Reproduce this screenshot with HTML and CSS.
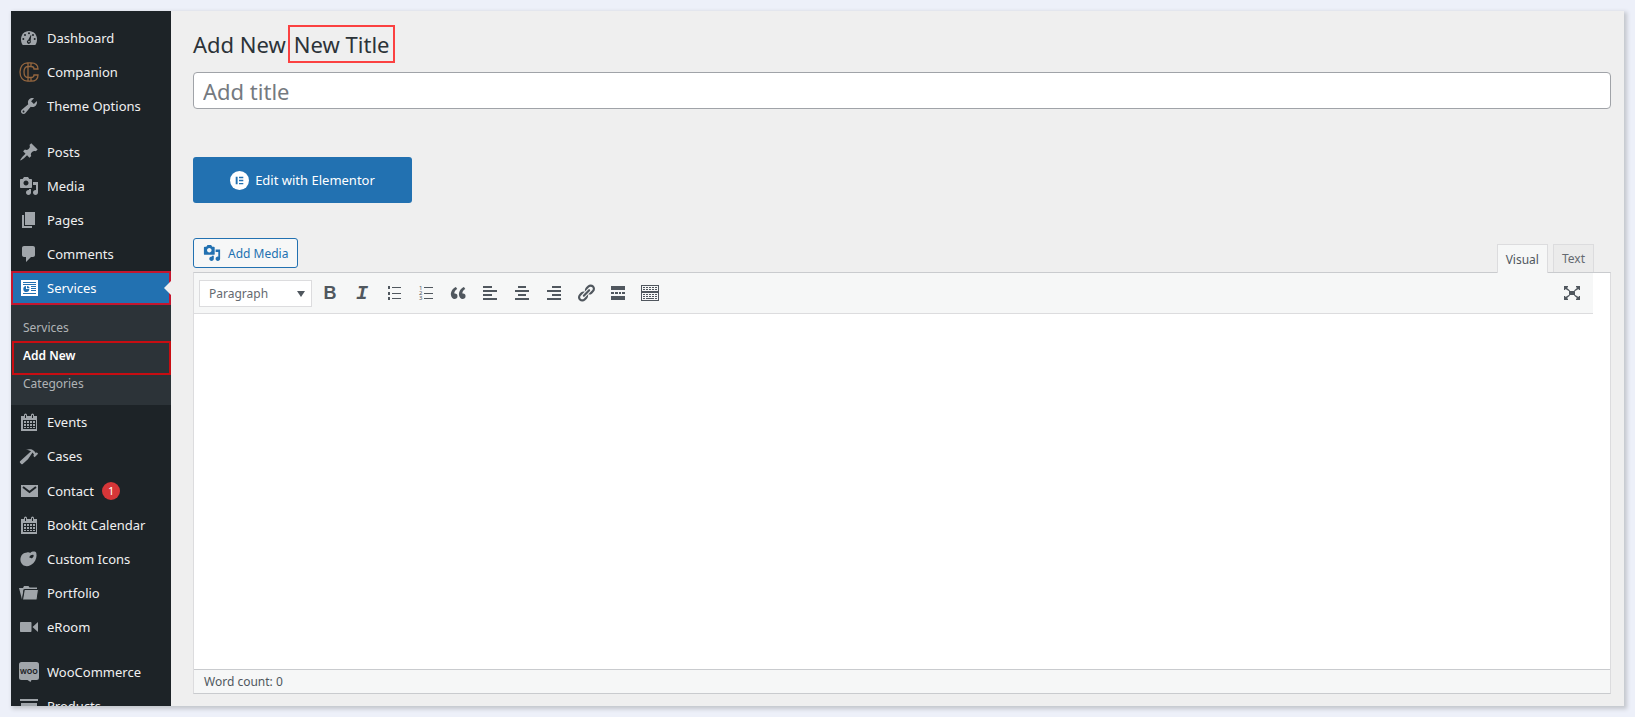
FILE: index.html
```html
<!DOCTYPE html>
<html lang="en">
<head>
    <meta charset="UTF-8">
    <meta name="viewport" content="width=device-width, initial-scale=1.0">
    <title>Add New Service</title>
    <link rel="stylesheet" href="styles.css">
</head>
<body>

    <div class="admin">
        <nav class="sidebar">
            <ul class="menu">
                <li><a href="#">
                    <svg class="icon" viewBox="0 0 20 20"><path d="M3.76 17h12.48c1.34-1.63 1.76-3.73 1.76-6 0-4.42-3.58-8-8-8s-8 3.58-8 8c0 2.27.42 4.37 1.76 6z"/><g class="hole"><circle cx="10" cy="5.2" r="1"/><circle cx="6" cy="7" r="1"/><circle cx="14" cy="7" r="1"/><circle cx="4.3" cy="11" r="1"/><circle cx="15.7" cy="11" r="1"/><path d="M11.8 7l.5.2-.7 5.6a2 2 0 1 1-2.4-.9z"/></g><circle cx="10" cy="13.6" r=".8"/></svg>
                    Dashboard</a></li>
                <li><a href="#">
                    <svg class="icon logo" viewBox="0 0 20 20"><path d="M9 .8h-.5C4 .8 1 4.500 1 10s3 9.200 7.500 9.200H9zM9 4.500C6 4.500 5 7 5 10s1 5.500 4 5.500M12 .8h-3M12 .8c4 0 7 2 7 6.200h-4c0-1.500-1.300-2.500-3-2.500zM12 19.200c4 0 7-2 7-6.200h-4c0 1.500-1.300 2.500-3 2.500zM9 4.500h3M9 15.500h3M9 19.200h3"/></svg>
                    Companion</a></li>
                <li><a href="#">
                    <svg class="icon" viewBox="0 0 20 20"><path d="M16.68 9.77c-1.34 1.34-3.3 1.67-4.95.99l-5.41 6.52c-.99.99-2.59.99-3.58 0s-.99-2.59 0-3.57l6.52-5.42c-.68-1.65-.35-3.61.99-4.95 1.28-1.28 3.12-1.62 4.72-1.06l-2.89 2.89 2.82 2.82 2.86-2.87c.53 1.58.18 3.39-1.08 4.65zM3.81 16.21c.4.39 1.04.39 1.43 0 .4-.4.4-1.04 0-1.43-.39-.4-1.03-.4-1.43 0-.39.39-.39 1.03 0 1.43z"/></svg>
                    Theme Options</a></li>
                <li class="separator"></li>
                <li><a href="#">
                    <svg class="icon" viewBox="0 0 20 20"><path d="M10.44 3.02l1.82-1.82 6.36 6.35-1.83 1.82c-1.05-.68-2.48-.57-3.41.36l-.75.75c-.92.93-1.04 2.35-.35 3.41l-1.83 1.82-2.41-2.41-2.8 2.79c-.42.42-3.38 2.71-3.8 2.29s1.86-3.39 2.28-3.81l2.79-2.79L4.1 9.36l1.83-1.82c1.05.69 2.48.57 3.4-.36l.75-.75c.93-.92 1.05-2.35.36-3.41z"/></svg>
                    Posts</a></li>
                <li><a href="#">
                    <svg class="icon" viewBox="0 0 20 20"><path id="media" d="M13 11V4c0-.55-.45-1-1-1h-1.67L9 1H5L3.67 3H2c-.55 0-1 .45-1 1v7c0 .55.45 1 1 1h10c.55 0 1-.45 1-1zM7 4.5c1.38 0 2.5 1.12 2.5 2.5S8.38 9.5 7 9.5 4.5 8.38 4.5 7 5.62 4.5 7 4.5zM14 6h5v10.5c0 1.38-1.12 2.5-2.5 2.5S14 17.88 14 16.5s1.12-2.5 2.5-2.5c.17 0 .34.02.5.05V9h-3V6zm-4 8.05V13h2v3.5c0 1.38-1.12 2.5-2.5 2.5S7 17.88 7 16.5 8.12 14 9.5 14c.17 0 .34.02.5.05z"/></svg>
                    Media</a></li>
                <li><a href="#">
                    <svg class="icon" viewBox="0 0 20 20"><path d="M6 15V2h10v13H6zm-1 1h8v2H3V5h2v11z"/></svg>
                    Pages</a></li>
                <li><a href="#">
                    <svg class="icon" viewBox="0 0 20 20"><path d="M5 2h9c1.1 0 2 .9 2 2v7c0 1.1-.9 2-2 2h-2l-5 5v-5H5c-1.1 0-2-.9-2-2V4c0-1.1.9-2 2-2z"/></svg>
                    Comments</a></li>
                <li class="current"><a href="#">
                    <svg class="icon" viewBox="0 0 20 20"><path d="M2 2h17v16H2z"/><g class="hole"><path d="M4 4h13v1H4zM4 6h13v1H4zM4 15h13v1H4zM12 8h5v1h-5zM12 10h5v1h-5zM12 12h5v1h-5z"/><path d="M7 8v3h3.300A3 3 0 1 1 7 8z"/><path d="M8 8c1.700 0 2.500 1 2.500 2.200H8z"/></g></svg>
                    Services</a>
                    <ul class="submenu">
                        <li><a href="#">Services</a></li>
                        <li class="active"><a href="#">Add New</a></li>
                        <li><a href="#">Categories</a></li>
                    </ul>
                </li>
                <li><a href="#">
                    <svg class="icon" viewBox="0 0 20 20"><g id="calendar"><path d="M15 4h3v15H2V4h3V3a1.500 1.500 0 0 1 3 0v1h4V3a1.500 1.500 0 0 1 3 0v1z"/><path class="hole" d="M6 3h1v3H6zM13 3h1v3h-1zM4 8h13v9H4z"/><path d="M5 9h2v2H5zM8 9h2v2H8zM11 9h2v2h-2zM14 9h2v2h-2zM5 12h2v2H5zM8 12h2v2H8zM11 12h2v2h-2zM14 12h2v2h-2zM5 15h2v1H5zM8 15h2v1H8zM11 15h2v1h-2zM14 15h2v1h-2z"/></g></svg>
                    Events</a></li>
                <li><a href="#">
                    <svg class="icon" viewBox="0 0 20 20"><path d="M17.7 6.32l1.41 1.42-3.47 3.41-1.42-1.42.84-.82c-.32-.76-.81-1.57-1.51-2.31l-4.61 6.59-5.26 4.7c-.39.39-1.02.39-1.42 0l-1.2-1.21c-.39-.39-.39-1.02 0-1.41l10.97-9.92c-1.37-.86-3.21-1.46-5.67-1.48 2.7-.82 4.95-.93 6.58-.3 1.7.66 2.82 2.2 3.91 3.58z"/></svg>
                    Cases</a></li>
                <li class="contact"><a href="#">
                    <svg class="icon" viewBox="0 0 20 20"><path d="M2 4h17v12H2z"/><path class="flap" d="M4 6l6.500 5L17 6"/></svg>
                    Contact <span class="count">1</span></a></li>
                <li><a href="#">
                    <svg class="icon" viewBox="0 0 20 20"><use href="#calendar"/></svg>
                    BookIt Calendar</a></li>
                <li><a href="#">
                    <svg class="icon" viewBox="0 0 20 20"><path fill-rule="evenodd" d="M8 3.400c1.200-.4 2.600-.2 3.200.6C13 2.200 16.500 2 17.300 4c.8 3-.2 7.200-2.800 10-3 3.300-7.800 4.200-10.800 1.700C.6 13 .8 8 3.500 5.300 4.700 4 6.300 3.600 8 3.400zM14.500 6c-1.300-.5-3.400.5-4 1.800-.3.9.3 1.300 1.300 1 .2.700 1.100.7 1.700 0 .8-.8 1.500-1.800 1-2.800z"/></svg>
                    Custom Icons</a></li>
                <li><a href="#">
                    <svg class="icon" viewBox="0 0 20 20"><path d="M0 5h4l1-2h4.500l1 1.500H18v2H4.500L3 16.500z"/><path class="edge" d="M5.300 6.500h14.200L18 17H3.500z"/></svg>
                    Portfolio</a></li>
                <li><a href="#">
                    <svg class="icon" viewBox="0 0 20 20"><path d="M2 5h9.500c.6 0 1 .4 1 1v8c0 .6-.4 1-1 1H2c-.6 0-1-.4-1-1V6c0-.6.4-1 1-1zM13.500 10L19 5v10z"/></svg>
                    eRoom</a></li>
                <li class="separator short"></li>
                <li><a href="#">
                    <svg class="icon" viewBox="0 0 20 20"><path d="M2.500 0h15A2.500 2.500 0 0 1 20 2.500v13a2.500 2.500 0 0 1-2.500 2.500h-5l-1 2-3-2h-6A2.500 2.500 0 0 1 0 15.500v-13A2.500 2.500 0 0 1 2.500 0z"/><text class="woo" x="10" y="12" text-anchor="middle">WOO</text></svg>
                    WooCommerce</a></li>
                <li><a href="#">
                    <svg class="icon" viewBox="0 0 20 20"><path d="M1 3h18v2H1zM2 7h16v10H2z"/></svg>
                    Products</a></li>
            </ul>
        </nav>

        <main class="content">
            <h1>Add New<span class="marked">New Title</span></h1>
            <input class="title" type="text" placeholder="Add title" aria-label="Add title">

            <button class="elementor" type="button">
                <svg class="badge" viewBox="0 0 20 20"><circle cx="10" cy="10" r="10"/><path class="bars" d="M6 6h2v8H6zM9.500 6H14v1.500H9.500zM9.500 9.200H14v1.500H9.500zM9.500 12.500H14V14H9.500z"/></svg>
                Edit with Elementor
            </button>

            <div class="tools">
                <button class="add-media" type="button">
                    <svg viewBox="0 0 20 20"><use href="#media"/></svg>
                    Add Media
                </button>
                <div class="tabs">
                    <button class="tab selected" type="button">Visual</button>
                    <button class="tab" type="button">Text</button>
                </div>
            </div>

            <div class="editor">
                <div class="toolbar">
                    <div class="format">
                        <select aria-label="Format">
                            <option>Paragraph</option>
                            <option>Heading 1</option>
                            <option>Heading 2</option>
                        </select>
                        <svg viewBox="0 0 8 8"><path d="M0 1h8L4 7z"/></svg>
                    </div>
                    <button class="bold" type="button" aria-label="Bold">B</button>
                    <button class="italic" type="button" aria-label="Italic">I</button>
                    <button type="button" aria-label="Bulleted list">
                        <svg viewBox="0 0 20 20"><path d="M4 3h2v3H4zM4 9h2v3H4zM4 14h2v3H4zM8 4h9v1H8zM8 10h9v1H8zM8 15h9v1H8z"/></svg>
                    </button>
                    <button type="button" aria-label="Numbered list">
                        <svg viewBox="0 0 20 20"><path d="M8 4h9v1H8zM8 10h9v1H8zM8 15h9v1H8z"/><g class="digits"><text x="3" y="7">1</text><text x="3" y="12">2</text><text x="3" y="17">3</text></g></svg>
                    </button>
                    <button type="button" aria-label="Blockquote">
                        <svg viewBox="0 0 20 20"><path d="M9.49 13.22c0-.74-.2-1.38-.61-1.9-.62-.78-1.83-.88-2.53-.72-.29-1.65 1.11-3.75 2.92-4.65L7.88 4c-2.73 1.3-5.42 4.28-4.96 8.05C3.21 14.43 4.59 16 6.54 16c.85 0 1.56-.25 2.12-.75s.83-1.18.83-2.03zm8.05 0c0-.74-.2-1.38-.61-1.9-.63-.78-1.83-.88-2.53-.72-.29-1.65 1.11-3.75 2.92-4.65L15.93 4c-2.73 1.3-5.41 4.28-4.95 8.05.29 2.38 1.66 3.95 3.61 3.95.85 0 1.56-.25 2.12-.75s.83-1.18.83-2.03z"/></svg>
                    </button>
                    <button type="button" aria-label="Align left">
                        <svg viewBox="0 0 20 20"><path d="M3 3h9v2H3zM3 7h14v2H3zM3 11h9v2H3zM3 15h14v2H3z"/></svg>
                    </button>
                    <button type="button" aria-label="Align center">
                        <svg viewBox="0 0 20 20"><path d="M6 3h8v2H6zM3 7h14v2H3zM6 11h8v2H6zM3 15h14v2H3z"/></svg>
                    </button>
                    <button type="button" aria-label="Align right">
                        <svg viewBox="0 0 20 20"><path d="M8 3h9v2H8zM3 7h14v2H3zM8 11h9v2H8zM3 15h14v2H3z"/></svg>
                    </button>
                    <button type="button" aria-label="Insert link">
                        <svg viewBox="0 0 20 20"><path d="M17.74 2.76c1.68 1.69 1.68 4.41 0 6.1l-1.53 1.52c-1.12 1.12-2.7 1.47-4.14 1.09l2.62-2.61.76-.77.76-.76c.84-.84.84-2.2 0-3.04-.84-.85-2.2-.85-3.04 0l-.77.76-3.38 3.38c-.37-1.44-.02-3.02 1.1-4.14l1.52-1.53c1.69-1.68 4.42-1.68 6.1 0zM8.59 13.43l5.34-5.34c.42-.42.42-1.1 0-1.52-.44-.43-1.13-.39-1.53 0l-5.33 5.34c-.42.42-.42 1.1 0 1.52.44.43 1.13.39 1.52 0zm-.76 2.29l4.14-4.15c.38 1.44.03 3.02-1.09 4.14l-1.52 1.53c-1.69 1.68-4.41 1.68-6.1 0-1.68-1.68-1.68-4.42 0-6.1l1.53-1.52c1.12-1.12 2.7-1.47 4.14-1.1l-4.14 4.15c-.85.84-.85 2.2 0 3.05.84.84 2.2.84 3.04 0z"/></svg>
                    </button>
                    <button type="button" aria-label="Read more">
                        <svg viewBox="0 0 20 20"><path d="M3 3h14v4H3zM3 9h3v2H3zM7 9h3v2H7zM11 9h2v2h-2zM14 9h3v2h-3zM3 13h14v4H3z"/></svg>
                    </button>
                    <button type="button" aria-label="Toolbar toggle">
                        <svg viewBox="0 0 20 20"><path fill-rule="evenodd" d="M1 2h18v7H1zM2 3v5h16V3zM1 9h18v9H1zM2 10v7h16v-7z"/><path d="M3 4h2v1H3zM6 4h2v1H6zM9 4h2v1H9zM12 4h2v1h-2zM15 4h2v1h-2zM3 6h2v1H3zM6 6h2v1H6zM9 6h2v1H9zM12 6h2v1h-2zM15 6h2v1h-2zM3 11h2v1H3zM6 11h2v1H6zM9 11h2v1H9zM12 11h2v1h-2zM15 11h2v1h-2zM3 13h2v1H3zM6 13h2v1H6zM9 13h2v1H9zM12 13h2v1h-2zM15 13h2v1h-2zM3 15h2v1H3zM6 15h8v1H6zM15 15h2v1h-2z"/></svg>
                    </button>
                    <button class="fullscreen" type="button" aria-label="Distraction-free writing">
                        <svg viewBox="0 0 20 20"><path d="M7 8h6v4H7zM2 3h4v1L5 5l3 2.500-.8.8L3.500 6 3 7H2zM18 3h-4v1l1 1-3 2.500.8.8L16.500 6l.5 1h1zM2 17h4v-1l-1-1 3-2.500-.8-.8L3.500 14 3 13H2zM18 17h-4v-1l1-1-3-2.500.8-.8 3.700 2.300.5-1h1z"/></svg>
                    </button>
                </div>
                <textarea class="text" aria-label="Content"></textarea>
                <div class="status">Word count: 0</div>
            </div>
        </main>
    </div>

</body>
</html>
```

FILE: styles.css
```css
*, *::after {
    box-sizing: border-box;
}

body {
    margin: 0;
    padding: 11px;
    background: #edf0f9;
    color: #3c434a;
    font-family: "Segoe UI", "Noto Sans", sans-serif;
    font-size: 13px;
}

button, input, select, textarea {
    font-family: inherit;
    margin: 0;
}

button {
    cursor: pointer;
}

ul {
    list-style: none;
    margin: 0;
    padding: 0;
}

.admin {
    display: flex;
    height: calc(100vh - 22px);
    overflow: hidden;
    background: #efefef;
    box-shadow: 2px 2px 4px 1px #c4c7cd;
}

/* Sidebar */
.sidebar {
    flex: 0 0 160px;
    padding-top: 10px;
    background: #1d2327;
}

.menu a {
    display: flex;
    align-items: center;
    height: 34px;
    padding-left: 8px;
    gap: 8px;
    color: #f0f0f1;
    font-size: 13px;
    text-decoration: none;
    white-space: nowrap;
}

.icon {
    width: 20px;
    height: 20px;
    flex: none;
    fill: #a0a5aa;
}

.hole {
    fill: #1d2327;
}

.flap {
    fill: none;
    stroke: #1d2327;
    stroke-width: 2;
}

.edge {
    stroke: #1d2327;
    stroke-width: 1;
}

.logo {
    fill: none;
    stroke: #94663f;
    stroke-width: 1.3;
}

.woo {
    fill: #1d2327;
    font-size: 7px;
    font-weight: bold;
}

.separator {
    height: 12px;
}

.separator.short {
    height: 11px;
}

.menu .contact a {
    height: 35px;
}

.current {
    position: relative;
}

.current > a {
    background: #2271b1;
    color: #fff;
    border: 2px solid #c5162e;
    padding-left: 6px;
}

.current .icon {
    fill: #fff;
}

.current .hole {
    fill: #2271b1;
}

.current > a::after {
    content: "";
    position: absolute;
    top: 10px;
    right: 0;
    border: 7px solid transparent;
    border-left-width: 0;
    border-right-color: #efefef;
}

.submenu {
    padding: 8px 0;
    background: #2c3338;
}

.menu .submenu a {
    height: 28px;
    padding-left: 12px;
    color: #b0b3b6;
    font-size: 12px;
}

.menu .submenu .active a {
    color: #fff;
    font-weight: 600;
}

.active {
    position: relative;
}

.active::after {
    content: "";
    position: absolute;
    top: 0;
    left: 1px;
    right: 0;
    height: 34px;
    border: 2px solid #c80d12;
    pointer-events: none;
}

.count {
    width: 18px;
    height: 18px;
    border-radius: 9px;
    background: #d63638;
    color: #fff;
    font-size: 11px;
    line-height: 18px;
    text-align: center;
}

/* Content */
.content {
    flex: 1;
    min-width: 0;
    display: flex;
    flex-direction: column;
    align-items: flex-start;
    padding: 14px 13px 12px 22px;
}

h1 {
    display: flex;
    align-items: center;
    gap: 2px;
    margin: 0 0 9px;
    color: #2c3338;
    font-size: 22px;
    font-weight: 400;
    line-height: 34px;
}

.marked {
    padding: 0 4px;
    border: 2px solid #fb4141;
}

.title {
    width: 100%;
    height: 37px;
    padding: 0 9px;
    border: 1px solid #a0a3a8;
    border-radius: 4px;
    background: #fff;
    font-size: 22px;
}

.title::placeholder {
    color: #757a80;
}

.elementor {
    display: flex;
    align-items: center;
    justify-content: center;
    gap: 6px;
    width: 219px;
    height: 46px;
    margin: 48px 0 35px;
    border: 0;
    border-radius: 3px;
    background: #2271b1;
    color: #fff;
    font-size: 13px;
}

.badge {
    width: 19px;
    height: 19px;
    fill: #fff;
}

.bars {
    fill: #2271b1;
}

.tools {
    display: flex;
    justify-content: space-between;
    align-items: flex-end;
    width: 100%;
    padding-right: 17px;
}

.add-media {
    display: flex;
    align-items: center;
    gap: 7px;
    height: 30px;
    margin-bottom: 4px;
    padding: 0 9px;
    border: 1px solid #2271b1;
    border-radius: 3px;
    background: #f6f7f7;
    color: #2271b1;
    font-size: 12px;
}

.add-media svg {
    width: 18px;
    height: 18px;
    fill: #2271b1;
}

.tabs {
    display: flex;
    gap: 5px;
}

.tab {
    height: 28px;
    padding: 0 8px;
    border: 1px solid #dcdcde;
    border-bottom: 0;
    background: #ebebeb;
    color: #646970;
    font-size: 12px;
}

.tab.selected {
    position: relative;
    height: 29px;
    margin-bottom: -1px;
    background: #f6f7f7;
    color: #50575e;
}

.editor {
    flex: 1;
    display: flex;
    flex-direction: column;
    width: 100%;
    border: 1px solid #dcdcde;
    border-top-color: #c9cbce;
    border-bottom-color: #c9cbce;
    background: #fff;
}

.toolbar {
    display: flex;
    align-items: center;
    height: 41px;
    margin-right: 17px;
    padding: 0 5px;
    border-bottom: 1px solid #dcdcde;
    background: #f6f7f7;
}

.toolbar button {
    display: flex;
    align-items: center;
    justify-content: center;
    width: 32px;
    height: 28px;
    padding: 0;
    border: 0;
    background: none;
    color: #50575e;
}

.toolbar svg {
    width: 20px;
    height: 20px;
    fill: #50575e;
}

.toolbar .bold {
    font-family: "Liberation Sans", sans-serif;
    font-size: 18px;
    font-weight: bold;
}

.toolbar .italic {
    font-family: "Liberation Mono", monospace;
    font-size: 20px;
    font-style: italic;
    font-weight: bold;
}

.toolbar .fullscreen {
    margin-left: auto;
}

.digits {
    font-size: 6px;
}

.format {
    position: relative;
    width: 113px;
    margin-right: 2px;
}

.format select {
    appearance: none;
    width: 100%;
    height: 27px;
    padding: 0 9px;
    border: 1px solid #dcdcde;
    border-radius: 0;
    background: #fff;
    color: #646970;
    font-size: 12px;
}

.format svg {
    position: absolute;
    top: 10px;
    right: 7px;
    width: 8px;
    height: 8px;
    pointer-events: none;
}

.text {
    flex: 1;
    width: 100%;
    padding: 10px;
    border: 0;
    background: #fff;
    resize: none;
}

.status {
    height: 24px;
    padding: 0 10px;
    border-top: 1px solid #c9cbce;
    background: #f6f7f7;
    color: #50575e;
    font-size: 12px;
    line-height: 23px;
}
```
